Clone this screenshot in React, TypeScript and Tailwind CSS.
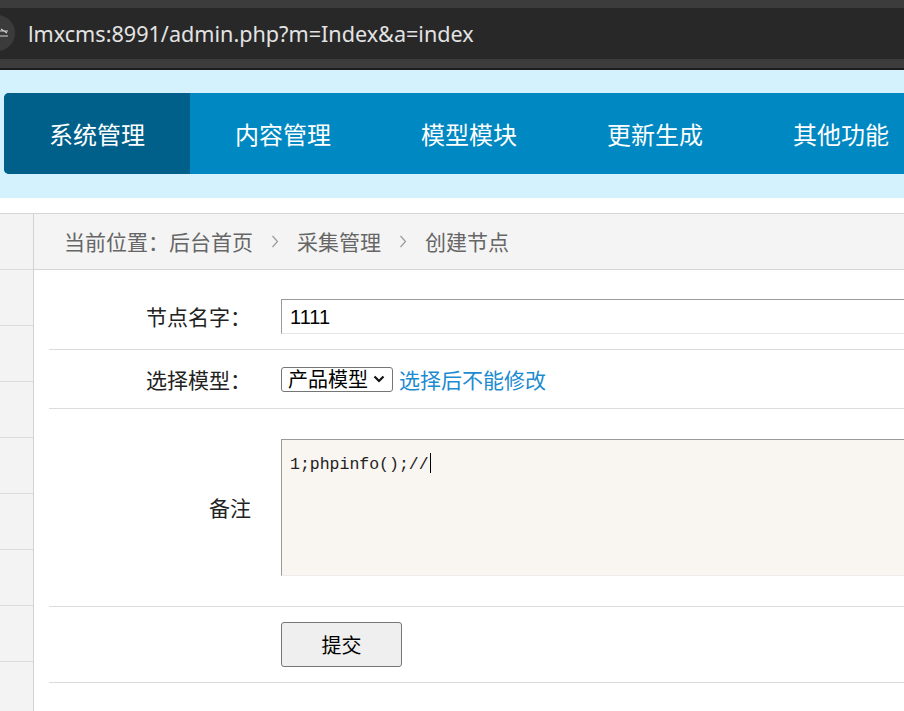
import React from "react";

const cjk = '"Noto Sans CJK SC", "Noto Sans", sans-serif';

function Chevron() {
  return (
    <svg width="8" height="13" viewBox="0 0 8 13" className="mx-[18px] shrink-0">
      <polyline points="1.5,1 6.5,6.5 1.5,12" fill="none" stroke="#9a9a9a" strokeWidth="1.2" />
    </svg>
  );
}

export default function App() {
  const tabs = ["系统管理", "内容管理", "模型模块", "更新生成", "其他功能"];
  return (
    <div className="w-[904px] h-[711px] overflow-hidden bg-white relative" style={{ fontFamily: cjk }}>
      {/* browser chrome */}
      <div className="h-[8px] bg-[#3c3c3c]" />
      <div className="h-[51px] bg-[#282828] relative flex items-center">
        <div className="absolute left-[-21px] top-[7px] w-[36px] h-[36px] rounded-full bg-[#3b3b3b] flex items-center justify-end pr-[6px]">
          <svg width="10" height="12" viewBox="0 0 10 12">
            <path d="M0 4 H9 M0 9 H9 M2 2 L8 6" stroke="#cfcfcf" strokeWidth="1.2" fill="none" />
          </svg>
        </div>
        <span
          className="ml-[28px] text-[21.6px] text-[#e3e3e3] leading-none whitespace-nowrap"
          style={{ fontFamily: '"Noto Sans", "Open Sans", sans-serif' }}
        >
          lmxcms:8991/admin.php?m=Index&amp;a=index
        </span>
      </div>
      <div className="h-[9px] bg-[#3c3c3c]" />
      <div className="h-[2px] bg-[#1c1c1c]" />

      {/* top nav band */}
      <div className="h-[128px] bg-[#d4f2fe] pt-[23px] pl-[4px]">
        <div className="h-[81px] bg-[#0088c2] rounded-l-[5px] flex">
          {tabs.map((t, i) => (
            <div
              key={t}
              className={
                "w-[186px] shrink-0 flex items-center justify-center text-white text-[24px] leading-none " +
                (i === 0 ? "bg-[#00608a] rounded-l-[5px]" : "")
              }
            >
              {t}
            </div>
          ))}
        </div>
      </div>

      <div className="h-[15px]" />

      {/* main */}
      <div className="border-t border-[#d6d6d6] flex">
        {/* sidebar */}
        <div className="w-[34px] shrink-0 bg-[#f3f3f3] border-r border-[#d2d2d2] h-[520px]">
          {Array.from({ length: 9 }).map((_, i) => (
            <div key={i} className="h-[56px] border-b border-[#dcdcdc]" />
          ))}
        </div>

        <div className="flex-1 min-w-0">
          {/* breadcrumb */}
          <div className="h-[56px] bg-[#f4f4f4] border-b border-[#d6d6d6] flex items-center pl-[30px] text-[21px] text-[#666] leading-none whitespace-nowrap">
            <span>当前位置：后台首页</span>
            <Chevron />
            <span>采集管理</span>
            <Chevron />
            <span>创建节点</span>
          </div>

          {/* form */}
          <div className="pl-[15px] text-[21px] text-[#222]">
            {/* row 1 */}
            <div className="h-[80px] border-b border-[#dcdcdc] pt-[29px]">
              <div className="flex items-center h-[35px]">
                <div className="w-[202px] shrink-0 text-right leading-none">节点名字：</div>
                <div
                  className="ml-[30px] shrink-0 w-[700px] h-[35px] border border-t-[#9a9a9a] border-l-[#9a9a9a] border-r-[#e6e6e6] border-b-[#e6e6e6] flex items-center pl-[8px] text-[20px] text-black"
                  style={{ fontFamily: '"Liberation Sans", Arial, sans-serif' }}
                >
                  1111
                </div>
              </div>
            </div>

            {/* row 2 */}
            <div className="h-[59px] border-b border-[#dcdcdc] flex items-center">
              <div className="w-[202px] shrink-0 text-right leading-none">选择模型：</div>
              <div className="ml-[30px] shrink-0 h-[25px] w-[112px] border border-[#767676] rounded-[3px] flex items-center pl-[6px] text-[20px] text-black leading-none">
                <span>产品模型</span>
                <svg width="12" height="8" viewBox="0 0 12 8" className="ml-[5px]">
                  <polyline points="1.5,1.5 6,6 10.5,1.5" fill="none" stroke="#111" strokeWidth="2.2" />
                </svg>
              </div>
              <span className="ml-[6px] text-[#1c8bd0] leading-none whitespace-nowrap">选择后不能修改</span>
            </div>

            {/* row 3 */}
            <div className="h-[198px] border-b border-[#dcdcdc] flex items-center">
              <div className="w-[202px] shrink-0 text-right leading-none">备注</div>
              <div className="ml-[30px] shrink-0 w-[700px] h-[137px] bg-[#f9f5f1] border border-t-[#9a9a9a] border-l-[#9a9a9a] border-r-[#ececec] border-b-[#ececec] pl-[8px] pt-[8px] leading-[24px]">
                <span
                  className="text-[16.5px] text-[#222]"
                  style={{ fontFamily: '"Liberation Mono", "Courier New", monospace' }}
                >
                  1;phpinfo();//
                </span>
                <span className="inline-block w-[1px] h-[20px] bg-black align-middle ml-[1px]" />
              </div>
            </div>

            {/* row 4 */}
            <div className="h-[76px] border-b border-[#dcdcdc] flex items-center">
              <div className="w-[202px] shrink-0" />
              <button className="ml-[30px] w-[121px] h-[45px] bg-[#efefef] border border-[#767676] rounded-[3px] text-[20px] text-black leading-none">
                提交
              </button>
            </div>
          </div>
        </div>
      </div>
    </div>
  );
}
